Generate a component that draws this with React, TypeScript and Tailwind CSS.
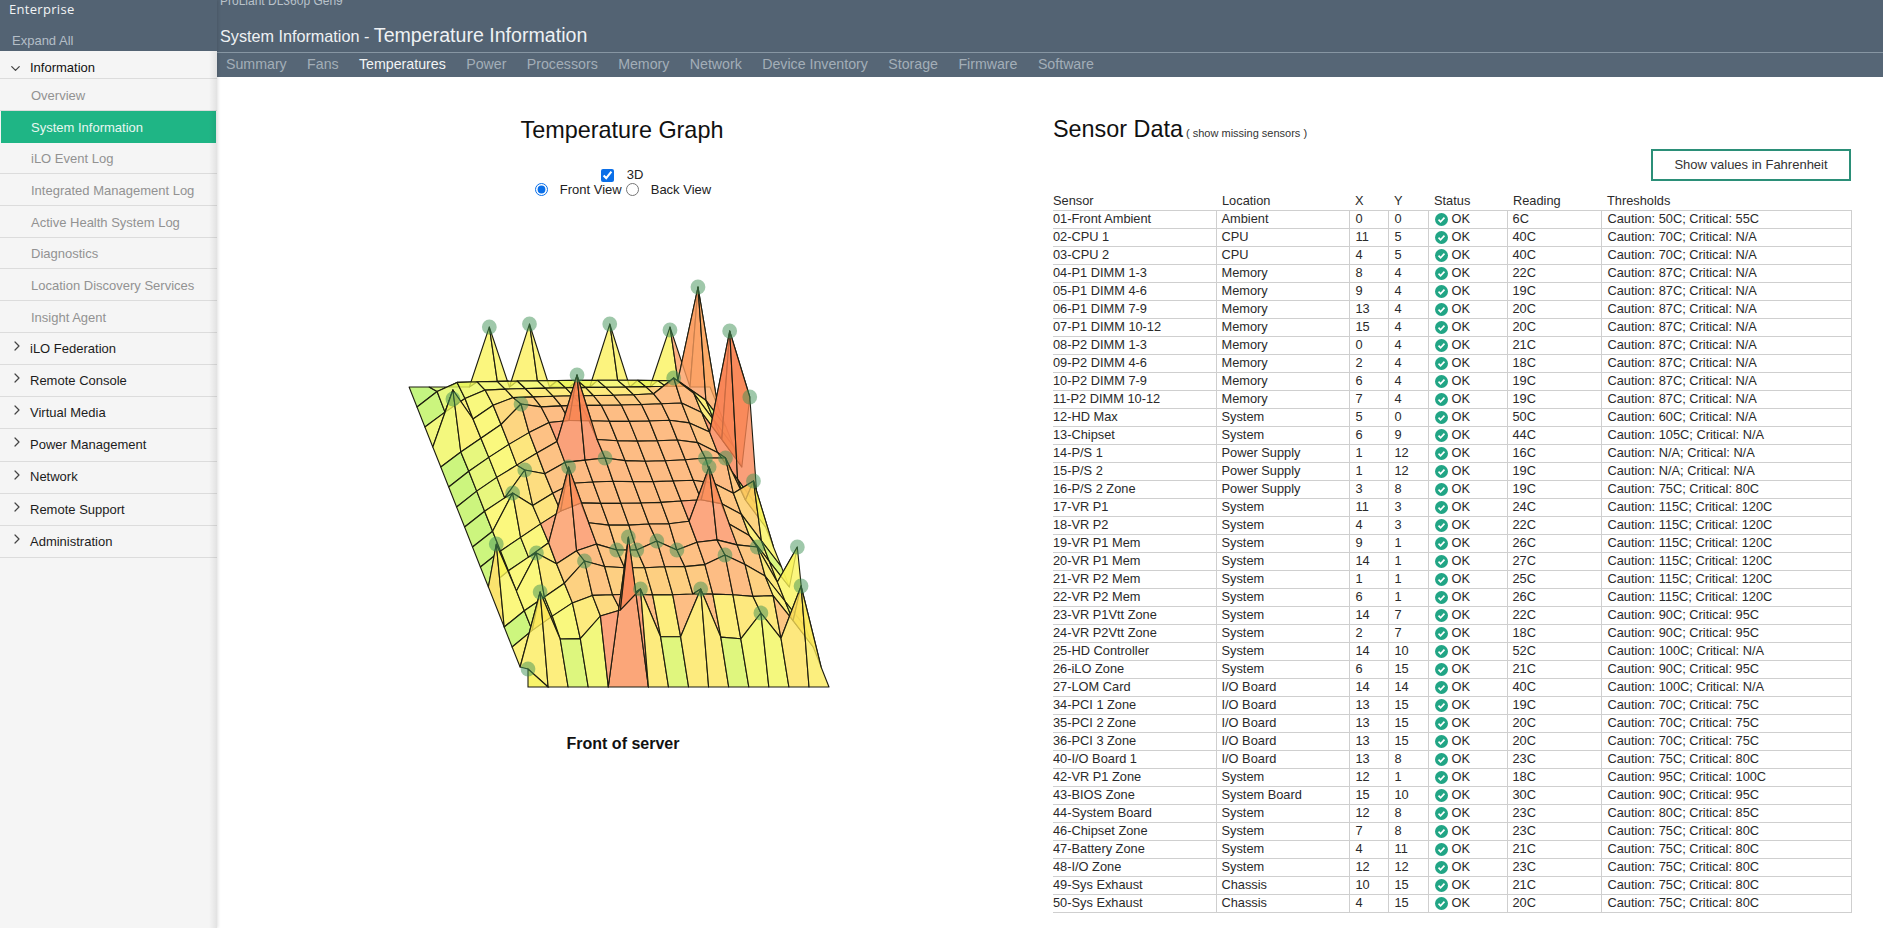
import React from 'react';
import { ChevronDown, ChevronRight } from 'lucide-react';

type Sensor = [string, string, number, number, number, string];

const sensors: Sensor[] = [
  ['01-Front Ambient', 'Ambient', 0, 0, 6, 'Caution: 50C; Critical: 55C'],
  ['02-CPU 1', 'CPU', 11, 5, 40, 'Caution: 70C; Critical: N/A'],
  ['03-CPU 2', 'CPU', 4, 5, 40, 'Caution: 70C; Critical: N/A'],
  ['04-P1 DIMM 1-3', 'Memory', 8, 4, 22, 'Caution: 87C; Critical: N/A'],
  ['05-P1 DIMM 4-6', 'Memory', 9, 4, 19, 'Caution: 87C; Critical: N/A'],
  ['06-P1 DIMM 7-9', 'Memory', 13, 4, 20, 'Caution: 87C; Critical: N/A'],
  ['07-P1 DIMM 10-12', 'Memory', 15, 4, 20, 'Caution: 87C; Critical: N/A'],
  ['08-P2 DIMM 1-3', 'Memory', 0, 4, 21, 'Caution: 87C; Critical: N/A'],
  ['09-P2 DIMM 4-6', 'Memory', 2, 4, 18, 'Caution: 87C; Critical: N/A'],
  ['10-P2 DIMM 7-9', 'Memory', 6, 4, 19, 'Caution: 87C; Critical: N/A'],
  ['11-P2 DIMM 10-12', 'Memory', 7, 4, 19, 'Caution: 87C; Critical: N/A'],
  ['12-HD Max', 'System', 5, 0, 50, 'Caution: 60C; Critical: N/A'],
  ['13-Chipset', 'System', 6, 9, 44, 'Caution: 105C; Critical: N/A'],
  ['14-P/S 1', 'Power Supply', 1, 12, 16, 'Caution: N/A; Critical: N/A'],
  ['15-P/S 2', 'Power Supply', 1, 12, 19, 'Caution: N/A; Critical: N/A'],
  ['16-P/S 2 Zone', 'Power Supply', 3, 8, 19, 'Caution: 75C; Critical: 80C'],
  ['17-VR P1', 'System', 11, 3, 24, 'Caution: 115C; Critical: 120C'],
  ['18-VR P2', 'System', 4, 3, 22, 'Caution: 115C; Critical: 120C'],
  ['19-VR P1 Mem', 'System', 9, 1, 26, 'Caution: 115C; Critical: 120C'],
  ['20-VR P1 Mem', 'System', 14, 1, 27, 'Caution: 115C; Critical: 120C'],
  ['21-VR P2 Mem', 'System', 1, 1, 25, 'Caution: 115C; Critical: 120C'],
  ['22-VR P2 Mem', 'System', 6, 1, 26, 'Caution: 115C; Critical: 120C'],
  ['23-VR P1Vtt Zone', 'System', 14, 7, 22, 'Caution: 90C; Critical: 95C'],
  ['24-VR P2Vtt Zone', 'System', 2, 7, 18, 'Caution: 90C; Critical: 95C'],
  ['25-HD Controller', 'System', 14, 10, 52, 'Caution: 100C; Critical: N/A'],
  ['26-iLO Zone', 'System', 6, 15, 21, 'Caution: 90C; Critical: 95C'],
  ['27-LOM Card', 'I/O Board', 14, 14, 40, 'Caution: 100C; Critical: N/A'],
  ['34-PCI 1 Zone', 'I/O Board', 13, 15, 19, 'Caution: 70C; Critical: 75C'],
  ['35-PCI 2 Zone', 'I/O Board', 13, 15, 20, 'Caution: 70C; Critical: 75C'],
  ['36-PCI 3 Zone', 'I/O Board', 13, 15, 20, 'Caution: 70C; Critical: 75C'],
  ['40-I/O Board 1', 'I/O Board', 13, 8, 23, 'Caution: 75C; Critical: 80C'],
  ['42-VR P1 Zone', 'System', 12, 1, 18, 'Caution: 95C; Critical: 100C'],
  ['43-BIOS Zone', 'System Board', 15, 10, 30, 'Caution: 90C; Critical: 95C'],
  ['44-System Board', 'System', 12, 8, 23, 'Caution: 80C; Critical: 85C'],
  ['46-Chipset Zone', 'System', 7, 8, 23, 'Caution: 75C; Critical: 80C'],
  ['47-Battery Zone', 'System', 4, 11, 21, 'Caution: 75C; Critical: 80C'],
  ['48-I/O Zone', 'System', 12, 12, 23, 'Caution: 75C; Critical: 80C'],
  ['49-Sys Exhaust', 'Chassis', 10, 15, 21, 'Caution: 75C; Critical: 80C'],
  ['50-Sys Exhaust', 'Chassis', 4, 15, 20, 'Caution: 75C; Critical: 80C'],
];

const subItems = [
  'Overview',
  'System Information',
  'iLO Event Log',
  'Integrated Management Log',
  'Active Health System Log',
  'Diagnostics',
  'Location Discovery Services',
  'Insight Agent',
];

const groups = ['iLO Federation', 'Remote Console', 'Virtual Media', 'Power Management', 'Network', 'Remote Support', 'Administration'];
const tabs = ['Summary', 'Fans', 'Temperatures', 'Power', 'Processors', 'Memory', 'Network', 'Device Inventory', 'Storage', 'Firmware', 'Software'];

// how far the surface has risen at 0, 1, 2... cells in from each edge
const riseLeft = [0, 0.27, 0.5, 0.7, 0.87, 1];
const riseRight = [0, 0.4, 0.8, 0.95, 1];
const riseFront = [0, 0.45, 0.8, 0.95, 1];
const riseBack = [0, 0.42, 0.62, 0.8, 0.95, 1];

const rise = (table: number[], d: number) => (d < table.length ? table[d] : 1);

// the reading at each grid vertex, by inverse distance from the sensors
function buildGrid() {
  const grid: number[][] = [];
  for (let y = 0; y < 16; y++) {
    const row: number[] = [];
    for (let x = 0; x < 16; x++) {
      let sum = 0;
      let weight = 0;
      for (const s of sensors) {
        const d = (s[2] - x) ** 2 + (s[3] - y) ** 2;
        const w = 1 / (d + 0.5);
        sum += Math.min(s[4], 24) * w;
        weight += w;
      }
      const damp = Math.min(rise(riseLeft, x), rise(riseRight, 15 - x), rise(riseFront, y), rise(riseBack, 15 - y));
      row.push((sum / weight) * damp);
    }
    grid.push(row);
  }
  grid[1][4] = 17;
  grid[1][5] = 19;
  for (const s of sensors) grid[s[3]][s[2]] = s[4];
  return grid;
}

const stops: [number, number[]][] = [
  [0, [60, 245, 150]],
  [3, [185, 242, 90]],
  [8, [222, 245, 90]],
  [13, [250, 246, 90]],
  [17, [253, 222, 90]],
  [21, [252, 172, 98]],
  [32, [251, 142, 92]],
  [45, [240, 90, 45]],
];

function heatColor(t: number) {
  for (let i = 1; i < stops.length; i++) {
    if (t <= stops[i][0]) {
      const [t0, c0] = stops[i - 1];
      const [t1, c1] = stops[i];
      const k = (t - t0) / (t1 - t0);
      return `rgb(${c0.map((v, n) => Math.round(v + (c1[n] - v) * k)).join(',')})`;
    }
  }
  return 'rgb(240,90,45)';
}

const px = (x: number, y: number) => 528 + 20.07 * x - 7.93 * y;
const py = (y: number, t: number) => 687 - 20 * y - 3 * t;
const pt = (x: number, y: number, t: number) => `${px(x, y).toFixed(1)},${py(y, t).toFixed(1)}`;

function SurfaceGraph() {
  const grid = buildGrid();
  const quads: React.ReactNode[] = [];
  for (let y = 14; y >= 0; y--) {
    if (y === 3) {
      // sensors on the left edge stand on it like the front ones do
      quads.push(
        <polygon key="dimm-wall" points={`${pt(0, 3, 0)} ${pt(0, 4, 21)} ${pt(0, 5, 0)}`} fill="#fbe36e" stroke="#1c1c10" strokeWidth={1.1} />,
      );
    }
    if (y === 0) {
      // the two front sensors stand on the flat front edge
      quads.push(
        <polygon key="hd-wall" points={`${pt(4, 0, 0)} ${pt(5, 0, 50)} ${pt(6, 0, 0)}`} fill="#fba679" stroke="#1c1c10" strokeWidth={1.1} />,
      );
    }
    for (let x = 0; x < 15; x++) {
      const corners: [number, number][] = [[x, y], [x + 1, y], [x + 1, y + 1], [x, y + 1]];
      const temps = corners.map(([a, b]) => grid[b][a]);
      const avg = temps.reduce((a, b) => a + b, 0) / 4;
      const level = Math.max(...temps) * 0.4 + avg * 0.6;
      const points = corners.map(([a, b]) => pt(a, b, grid[b][a])).join(' ');
      quads.push(
        <polygon key={`${x}-${y}`} points={points} fill={heatColor(level)} fillOpacity={0.78} stroke="#1c1c10" strokeWidth={1.1} strokeLinejoin="round" />,
      );
    }
    if (y === 0) {
      quads.push(
        <polygon key="ambient-wall" points={`${pt(0, 0, 0)} ${pt(0, 0, 6)} ${pt(1, 0, 0)}`} fill="#f8f36a" stroke="#1c1c10" strokeWidth={1.1} />,
      );
    }
  }
  const seen = new Set<string>();
  const dots = sensors.filter((s) => {
    const key = `${s[2]}-${s[3]}`;
    if (seen.has(key)) return false;
    seen.add(key);
    return true;
  });
  return (
    <svg viewBox="390 260 460 440" width={460} height={440} className="block">
      {quads}
      {dots.map((s) => (
        <circle key={s[0]} cx={px(s[2], s[3])} cy={py(s[3], s[4])} r={7.4} fill="#3f9155" fillOpacity={0.5} />
      ))}
    </svg>
  );
}

function OkIcon() {
  return (
    <svg viewBox="0 0 14 14" width={13} height={13} className="shrink-0">
      <circle cx="7" cy="7" r="7" fill="#21a585" />
      <path d="M3.8 7.2l2.2 2.2 4.2-4.4" fill="none" stroke="#fff" strokeWidth="1.8" />
    </svg>
  );
}

export default function App() {
  return (
    <div className="flex h-screen w-full overflow-hidden bg-white font-['Liberation_Sans',Arial,sans-serif] text-[#222]">
      {/* left nav */}
      <div className="relative z-10 flex w-[217px] shrink-0 flex-col bg-[#f5f5f5] shadow-[1px_0_3px_rgba(0,0,0,0.12)]">
        <div className="flex h-[51px] flex-col overflow-hidden bg-[#536373] pl-[9px]">
          <div className="-mt-[13px] h-[14px] font-['Open_Sans',sans-serif] text-[13px] leading-[14px] text-[#aab4bd]">Hewlett Packard</div>
          <div className="h-[17px] font-['Open_Sans',sans-serif] text-[13px] leading-[17px] tracking-[0.3px] text-[#f2f4f5]">Enterprise</div>
          <div className="pt-[15px] pl-[3px] text-[13px] leading-[16px] text-[#b4bec7]">Expand All</div>
        </div>
        <div className="flex h-[28px] items-center border-b border-[#dcdcdc] pt-[7px] text-[13px]">
          <ChevronDown size={15} strokeWidth={2} className="ml-[8px] mr-[7px] text-[#444]" />
          <span className="text-[#111]">Information</span>
        </div>
        {subItems.map((item) => (
          <div
            key={item}
            className={
              item === 'System Information'
                ? 'mx-px flex h-[32px] items-center bg-[#1fb585] pl-[30px] pt-[2px] text-[13px] text-[#e8f7f1]'
                : 'flex h-[31.7px] items-center border-b border-[#dcdcdc] pl-[31px] pt-[2px] text-[13px] text-[#929292]'
            }
          >
            {item}
          </div>
        ))}
        {groups.map((item) => (
          <div key={item} className="relative flex h-[32.2px] items-center border-b border-[#dcdcdc] pl-[30px] text-[13px] text-[#1c1c1c]">
            <ChevronRight size={16} strokeWidth={1.8} className="absolute left-[9px] top-[5px] text-[#444]" />
            {item}
          </div>
        ))}
        <div className="pointer-events-none absolute inset-y-[51px] right-0 bottom-0 w-[8px] bg-gradient-to-r from-transparent to-[#00000014]" />
      </div>

      <div className="flex min-w-0 flex-1 flex-col">
        {/* page header */}
        <div className="h-[52px] overflow-hidden bg-[#536373] pl-[3px]">
          <div className="-mt-[6px] h-[14px] text-[12px] leading-[14px] text-[#b9c2ca]">ProLiant DL360p Gen9</div>
          <div className="flex items-baseline pt-[15px] text-[#eef1f3]">
            <span className="text-[16.2px] leading-[24px]">System Information -&nbsp;</span>
            <span className="text-[19.6px] leading-[24px]">Temperature Information</span>
          </div>
        </div>
        <div className="flex h-[25px] items-center gap-[20.4px] border-t border-[#8796a3] bg-[#566676] pl-[9px] text-[14.2px] text-[#a3aeb8]">
          {tabs.map((tab) => (
            <span key={tab} className={tab === 'Temperatures' ? 'text-[#f2f4f5]' : ''}>
              {tab}
            </span>
          ))}
        </div>

        <div className="flex flex-1">
          {/* graph column */}
          <div className="flex w-[810px] shrink-0 flex-col items-center pt-[39px]">
            <h2 className="text-[23.4px] leading-[29px] text-[#111]">Temperature Graph</h2>
            <div className="mt-[24px] flex h-[13px] items-center text-[13px] text-[#222]">
              <input type="checkbox" defaultChecked className="m-0 h-[13px] w-[13px] accent-[#0b6fe8]" />
              <span className="ml-[13px] -mt-[1px]">3D</span>
            </div>
            <div className="flex h-[15px] items-center pl-[2px] text-[13px] text-[#222]">
              <input type="radio" name="view" defaultChecked className="m-0 h-[13px] w-[13px] accent-[#0b6fe8]" />
              <span className="ml-[12px]">Front View</span>
              <input type="radio" name="view" className="m-0 ml-[4px] h-[13px] w-[13px] accent-[#0b6fe8]" />
              <span className="ml-[12px]">Back View</span>
            </div>
            <div className="mt-[63px] -ml-[5px]">
              <SurfaceGraph />
            </div>
            <div className="mt-[35px] ml-[2px] text-[16px] font-bold leading-[18px] text-[#111]">Front of server</div>
          </div>

          {/* sensor table */}
          <div className="ml-[26px] w-[798px] shrink-0 pt-[38px]">
            <div className="flex items-baseline">
              <h2 className="text-[23.4px] leading-[29px] text-[#111]">Sensor Data</h2>
              <span className="ml-[3px] text-[11px] text-[#333]">( show missing sensors )</span>
            </div>
            <div className="mt-[5px] flex justify-end">
              <button className="h-[32px] w-[200px] border-2 border-[#2b8f78] bg-white text-[13px] text-[#333]">Show values in Fahrenheit</button>
            </div>
            <table className="mt-[12px] w-[798px] table-fixed border-collapse text-[12.8px] leading-[16px] text-[#2a2a2a]">
              <colgroup>
                <col className="w-[163px]" />
                <col className="w-[133px]" />
                <col className="w-[39px]" />
                <col className="w-[40px]" />
                <col className="w-[79px]" />
                <col className="w-[94px]" />
                <col className="w-[250px]" />
              </colgroup>
              <thead>
                <tr className="h-[17px] text-left">
                  <th className="p-0 font-normal">Sensor</th>
                  <th className="p-0 pl-[6px] font-normal">Location</th>
                  <th className="p-0 pl-[6px] font-normal">X</th>
                  <th className="p-0 pl-[6px] font-normal">Y</th>
                  <th className="p-0 pl-[6px] font-normal">Status</th>
                  <th className="p-0 pl-[6px] font-normal">Reading</th>
                  <th className="p-0 pl-[6px] font-normal">Thresholds</th>
                </tr>
              </thead>
              <tbody>
                {sensors.map((s) => (
                  <tr key={s[0]} className="h-[18px] border-y border-[#cfcfcf]">
                    <td className="p-0">{s[0]}</td>
                    <td className="border-l border-[#cfcfcf] p-0 pl-[5px]">{s[1]}</td>
                    <td className="border-l border-[#cfcfcf] p-0 pl-[6px]">{s[2]}</td>
                    <td className="border-l border-[#cfcfcf] p-0 pl-[6px]">{s[3]}</td>
                    <td className="border-l border-[#cfcfcf] p-0 pl-[6px]">
                      <span className="flex items-center gap-[4px]">
                        <OkIcon />
                        OK
                      </span>
                    </td>
                    <td className="border-l border-[#cfcfcf] p-0 pl-[5px]">{s[4]}C</td>
                    <td className="border-x border-[#cfcfcf] p-0 pl-[6px]">{s[5]}</td>
                  </tr>
                ))}
              </tbody>
            </table>
          </div>
        </div>
      </div>
    </div>
  );
}
